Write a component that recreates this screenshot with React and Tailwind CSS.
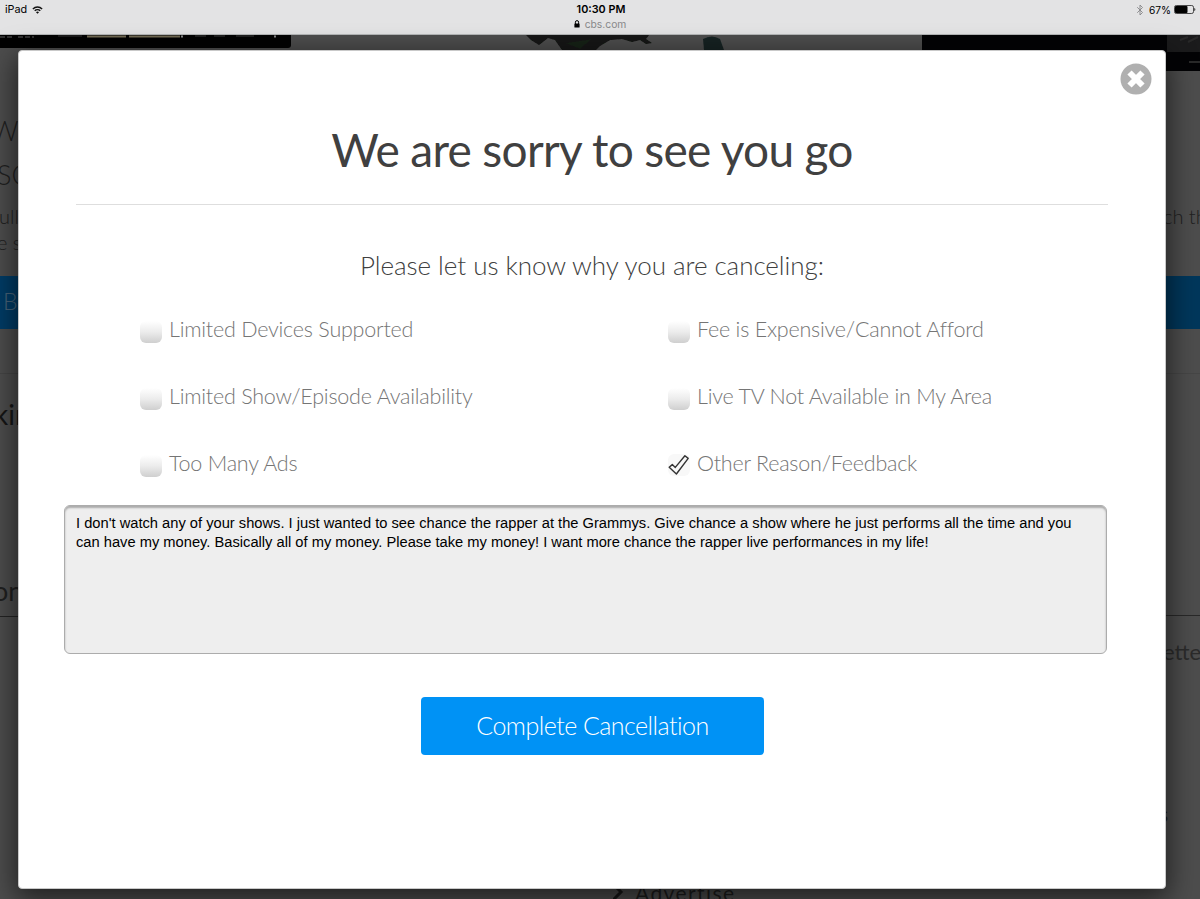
import { Bluetooth } from "lucide-react";

const reasons = [
  { label: "Limited Devices Supported" },
  { label: "Fee is Expensive/Cannot Afford" },
  { label: "Limited Show/Episode Availability" },
  { label: "Live TV Not Available in My Area" },
  { label: "Too Many Ads" },
  { label: "Other Reason/Feedback", checked: true },
];

const feedback =
  "I don't watch any of your shows. I just wanted to see chance the rapper at the Grammys. Give chance a show where he just performs all the time and you can have my money. Basically all of my money. Please take my money! I want more chance the rapper live performances in my life!";

function StatusBar() {
  return (
    <header className="grid h-[35px] shrink-0 grid-cols-3 border-b border-[#b4b6b7] bg-[#e3e3e4] font-['Inter',sans-serif] text-[11px] leading-[14px] text-black">
      <div className="flex h-[19px] items-center gap-[5px] pl-[5px]">
        <span className="text-[10.8px]">iPad</span>
        <svg width="11" height="8" viewBox="0 0 12 9" fill="none" stroke="#111" strokeWidth="1.6">
          <path d="M0.8 3.3a7.4 7.4 0 0 1 10.4 0" />
          <path d="M2.9 5.4a4.4 4.4 0 0 1 6.2 0" />
          <path d="M4.3 7 6 8.7 7.7 7a2.4 2.4 0 0 0-3.4 0Z" fill="#111" stroke="none" />
        </svg>
      </div>
      <div className="flex flex-col items-center pt-[3px] pl-[2px]">
        <span className="text-[10.8px] font-semibold">10:30 PM</span>
        <span className="mr-[2px] flex items-center gap-[5px] text-[#88898a]">
          <svg width="6" height="8" viewBox="0 0 6 8">
            <path d="M1.4 4V2.2a1.6 1.6 0 0 1 3.2 0V4" fill="none" stroke="#000" />
            <rect x="0.4" y="3.4" width="5.2" height="4.2" rx="0.7" />
          </svg>
          <span className="text-[10.3px]">cbs.com</span>
        </span>
      </div>
      <div className="flex h-[19px] items-center justify-end gap-[3px] pr-[4px]">
        <Bluetooth size={12} strokeWidth={1.8} className="text-[#858587]" />
        <span className="text-[10.2px]">67%</span>
        <svg width="22" height="9" viewBox="0 0 22 9">
          <rect x="0.5" y="0.5" width="19" height="8" rx="1.8" fill="none" stroke="#222" strokeWidth="0.8" />
          <rect x="1" y="1" width="12.5" height="7" rx="1" fill="#000" />
          <path d="M20.4 3c1.2.3 1.2 2.7 0 3Z" fill="#111" />
        </svg>
      </div>
    </header>
  );
}

// Lower edge of the promo artwork that sits above the page copy
function PromoArt() {
  return (
    <svg className="block h-[36px] w-full shrink-0" viewBox="0 0 1200 36">
      <defs>
        <filter id="soft" x="-5%" y="-50%" width="110%" height="200%">
          <feGaussianBlur stdDeviation="0.7" />
        </filter>
      </defs>
      <path d="M0 0H291V10Q291 13 288 13H0Z" fill="#020202" />
      <g filter="url(#soft)">
        <path d="M0 2H14M18 2H34" stroke="#3c3c3c" strokeWidth="1.4" strokeDasharray="5 2" />
        <path d="M58 1H82" stroke="#333" />
        <path d="M87 1.5H126M129 1.5H180" stroke="#716a53" strokeWidth="2.2" />
        <path d="M181 1.5H183M274 1.5H276" stroke="#888" strokeWidth="2" />
        <path d="M195 1H206M214 1H225M236 1H254" stroke="#292929" strokeWidth="1.5" />
        <path d="M526 0H649L646 4L652 8L646 9L640 5L632 7L622 4L610 5L600 11L596 15H562L555 5L548 3L539 10L531 5Z" fill="#131413" />
        <path d="M703 4Q712 -1 720 4L724 15H704Z" fill="#172323" />
        <path d="M565 8L592 4L580 14Z" fill="#182018" />
      </g>
      <path d="M922 0H1200V36H1162V30H922Z" fill="#030305" />
      <path d="M1167 0H1200V17H1167Z" fill="#1b1b1c" />
      <path d="M1180 5 1188 2M1188 7 1198 2M1189 27H1200" stroke="#292929" strokeWidth="2" />
    </svg>
  );
}

function PageBehind() {
  return (
    <div className="flex min-h-0 flex-1 flex-col bg-[#4d4d4d] font-['Lato',sans-serif] whitespace-nowrap text-[#202020]">
      <PromoArt />
      <div className="flex min-h-0 flex-1 justify-between">
        <div className="w-[60px] overflow-hidden">
          <div className="-ml-[9px] mt-[38px] h-[44px] text-[27px] leading-[44px] font-light">W</div>
          <div className="-ml-[3px] h-[44px] text-[27px] leading-[44px] font-light">SC</div>
          <div className="-ml-[1px] mt-[6px] h-[26px] text-[20px] leading-[26px] font-light">ull</div>
          <div className="-ml-[3px] h-[26px] text-[20px] leading-[26px] font-light">e s</div>
          <div className="mt-[21px] h-[53px] bg-[#003c66] pl-[3px] text-[23px] leading-[51px] font-light text-[#48647a]">B</div>
          <div className="mt-[44px] h-px bg-[#454545]" />
          <div className="-ml-[6px] mt-[24px] h-[32px] text-[28px] leading-[32px] text-[#151515]">kin</div>
          <div className="-ml-[7px] mt-[145px] h-[32px] text-[27px] leading-[32px]">on</div>
          <div className="mt-[9px] h-px bg-[#242424]" />
        </div>
        <div className="flex w-[605px] flex-col overflow-hidden">
          <div className="mt-[132px] pl-[568px] text-[20px] leading-[26px] font-light">ch the</div>
          <div className="mt-[47px] h-[53px] shrink-0 bg-[#00375b]" />
          <div className="mt-[44px] h-px shrink-0 bg-[#464646]" />
          <div className="mt-[241px] h-px shrink-0 bg-[#292929]" />
          <div className="mt-[21px] pl-[568px] text-[22px] leading-[30px] text-[#2b2b2b]">etters</div>
          <div className="mt-[132px] pl-[564px] text-[21px] leading-[30px]">s</div>
          <div className="mt-[49px] flex items-center gap-[10px] pl-[18px] text-[21px] leading-[30px] tracking-[1.4px] text-[#1d1d1d]">
            <svg width="12" height="20" viewBox="0 0 12 20" fill="none" stroke="#181818" strokeWidth="3">
              <path d="m1 2 7 7-8 8" />
            </svg>
            Advertise
          </div>
        </div>
      </div>
    </div>
  );
}

function Checkbox({ checked }) {
  if (checked) {
    return (
      <span className="mt-[4px] flex size-[22px] items-center justify-center rounded-[6px] bg-[#f8f8f8]">
        <svg width="22" height="22" viewBox="0 0 22 22" fill="none" stroke="#333" strokeWidth="1.4" strokeLinejoin="round">
          <path d="m1.2 13.2 3.1-2.6 3 2.8 9.6-11.6 3.3 2.6L8.4 20Z" />
        </svg>
      </span>
    );
  }
  return (
    <span className="mt-[5px] size-[22px] rounded-[6px] bg-linear-to-b from-white via-[#ececec] to-[#cfcfcf]" />
  );
}

function Reason({ label, checked }) {
  return (
    <label className="flex h-[27px] gap-[7px]">
      <Checkbox checked={checked} />
      <span className="text-[21.5px] leading-[26px] font-light tracking-[-0.22px] text-[#757575]">{label}</span>
    </label>
  );
}

function CancelDialog() {
  return (
    <div className="absolute top-[50px] left-[18px] h-[839px] w-[1148px] rounded-[4px] border border-[#c9c9c9] bg-white font-['Lato',sans-serif] shadow-[0_8px_28px_2px_rgba(0,0,0,0.6)]">
      <button className="absolute top-[12px] right-[13px]">
        <svg width="32" height="32" viewBox="0 0 32 32">
          <circle cx="16" cy="16" r="15.5" fill="#b0b0b0" />
          <path d="m9.5 9.5 13 13M22.5 9.5l-13 13" stroke="#fff" strokeWidth="6" />
        </svg>
      </button>

      <div className="mx-[57px] border-b border-[#dedede] pt-[70px] pb-[25px]">
        <h1 className="text-center text-[46px] leading-[58px] tracking-[-0.68px] text-[#404040]">
          We are sorry to see you go
        </h1>
      </div>
      <h2 className="mt-[42px] text-center text-[26px] leading-[36px] font-light tracking-[-0.05px] text-[#404040]">
        Please let us know why you are canceling:
      </h2>

      <div className="mt-[33px] grid grid-cols-[528px_1fr] gap-y-[40px] pl-[121px]">
        {reasons.map((reason) => (
          <Reason key={reason.label} {...reason} />
        ))}
      </div>

      <textarea
        className="mt-[28px] ml-[45px] block h-[149px] w-[1043px] resize-none rounded-[6px] border border-[#acacac] bg-[#eee] py-[8px] pr-[12px] pl-[11px] font-['Liberation_Sans',sans-serif] text-[14.7px] leading-[18.7px] text-black shadow-[inset_0_2px_2px_#aaa]"
        defaultValue={feedback}
      />

      <button className="mt-[43px] ml-[402px] h-[58px] w-[343px] rounded-[4px] bg-[#0092f5] pb-px text-[25px] font-light tracking-[-0.53px] text-white">
        Complete Cancellation
      </button>
    </div>
  );
}

export default function App() {
  return (
    <div className="relative flex h-[899px] w-[1200px] flex-col overflow-hidden">
      <StatusBar />
      <PageBehind />
      <CancelDialog />
    </div>
  );
}
